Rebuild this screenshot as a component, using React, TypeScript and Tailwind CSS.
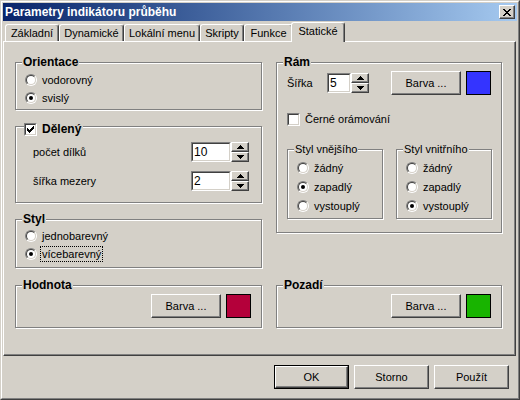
import type { ReactNode } from 'react';

function Raised({ className = '', children }: { className?: string; children?: ReactNode }) {
  return (
    <div
      className={`flex items-center justify-center border border-t-white border-l-white border-b-[#404040] border-r-[#404040] shadow-[inset_-1px_-1px_0_#808080] bg-[#D4D0C8] ${className}`}
    >
      {children}
    </div>
  );
}

function Arrow({ down }: { down?: boolean }) {
  return (
    <svg width="7" height="4" viewBox="0 0 7 4" shapeRendering="crispEdges">
      {down ? (
        <>
          <rect x="0" y="0" width="7" height="1" />
          <rect x="1" y="1" width="5" height="1" />
          <rect x="2" y="2" width="3" height="1" />
          <rect x="3" y="3" width="1" height="1" />
        </>
      ) : (
        <>
          <rect x="3" y="0" width="1" height="1" />
          <rect x="2" y="1" width="3" height="1" />
          <rect x="1" y="2" width="5" height="1" />
          <rect x="0" y="3" width="7" height="1" />
        </>
      )}
    </svg>
  );
}

function Spin({ value, editClass }: { value: string; editClass: string }) {
  return (
    <div className="flex h-[20px]">
      <div className={`h-[20px] border border-t-[#808080] border-l-[#808080] border-b-white border-r-white ${editClass}`}>
        <div className="h-full border border-t-[#404040] border-l-[#404040] border-b-[#D4D0C8] border-r-[#D4D0C8] bg-white pl-[1px] leading-[16px] text-[12px]">
          {value}
        </div>
      </div>
      <div className="flex flex-col w-[18px]">
        <Raised className="h-[10px]">
          <Arrow />
        </Raised>
        <Raised className="h-[10px]">
          <Arrow down />
        </Raised>
      </div>
    </div>
  );
}

function Radio({ checked, label, focus }: { checked?: boolean; label: string; focus?: boolean }) {
  return (
    <div className="flex items-center">
      <div className="w-[12px] h-[12px] rounded-full border border-t-[#808080] border-l-[#808080] border-b-white border-r-white">
        <div className="w-full h-full rounded-full border border-t-[#404040] border-l-[#404040] border-b-[#D4D0C8] border-r-[#D4D0C8] bg-white flex items-center justify-center">
          {checked && <div className="w-[4px] h-[4px] rounded-full bg-black" />}
        </div>
      </div>
      <span
        className={`ml-[3px] px-[1px] leading-[14px] border ${focus ? 'border-dotted border-black' : 'border-transparent'}`}
      >
        {label}
      </span>
    </div>
  );
}

function Check({ checked }: { checked?: boolean }) {
  return (
    <div className="w-[13px] h-[13px] shrink-0 border border-t-[#808080] border-l-[#808080] border-b-white border-r-white">
      <div className="w-full h-full border border-t-[#404040] border-l-[#404040] border-b-[#D4D0C8] border-r-[#D4D0C8] bg-white flex items-center justify-center">
        {checked && (
          <svg width="7" height="7" viewBox="0 0 7 7" shapeRendering="crispEdges">
            <rect x="6" y="0" width="1" height="1" />
            <rect x="5" y="1" width="2" height="1" />
            <rect x="0" y="2" width="1" height="1" />
            <rect x="4" y="2" width="3" height="1" />
            <rect x="0" y="3" width="2" height="1" />
            <rect x="3" y="3" width="3" height="1" />
            <rect x="0" y="4" width="5" height="1" />
            <rect x="1" y="5" width="3" height="1" />
            <rect x="2" y="6" width="1" height="1" />
          </svg>
        )}
      </div>
    </div>
  );
}

function Group({
  title,
  legend,
  bold = true,
  className = '',
  children,
}: {
  title?: string;
  legend?: ReactNode;
  bold?: boolean;
  className?: string;
  children?: ReactNode;
}) {
  return (
    <fieldset className={`border border-[#808080] shadow-[inset_1px_1px_0_#fff,1px_1px_0_#fff] ${className}`}>
      {legend ?? (
        <legend
          className={`ml-[6px] px-[1px] leading-[12px] bg-[#D4D0C8] ${bold ? 'font-bold text-[12px]' : 'text-[11px]'}`}
        >
          {title}
        </legend>
      )}
      {children}
    </fieldset>
  );
}

function ColorRow({ swatch }: { swatch: string }) {
  return (
    <div className="mt-[3px] h-[24px] flex justify-end items-center gap-[5px] pr-[10px]">
      <Raised className="w-[70px] h-[24px]">Barva ...</Raised>
      <div className={`w-[25px] h-[24px] border border-black ${swatch}`} />
    </div>
  );
}

const tabs = [
  { label: 'Základní', w: 'w-[54px]' },
  { label: 'Dynamické', w: 'w-[65px]' },
  { label: 'Lokální menu', w: 'w-[76px]' },
  { label: 'Skripty', w: 'w-[44px]' },
  { label: 'Funkce', w: 'w-[49px]' },
];

export default function App() {
  return (
    <div className="w-[520px] h-[400px] bg-[#D4D0C8] border border-t-[#D4D0C8] border-l-[#D4D0C8] border-b-[#404040] border-r-[#404040] font-['Liberation_Sans',Arial,sans-serif] text-[11px] text-black">
      <div className="h-full flex flex-col pt-[1px] border border-t-white border-l-white border-b-[#808080] border-r-[#808080]">
        {/* title bar */}
        <div className="mx-[1px] h-[18px] flex items-center justify-between bg-gradient-to-r from-[#0A246A] to-[#A6CAF0]">
          <span className="pl-[2px] font-bold text-[12px] text-white leading-[18px]">Parametry indikátoru průběhu</span>
          <Raised className="mr-[2px] w-[16px] h-[14px]">
            <svg width="8" height="7" viewBox="0 0 8 7" shapeRendering="crispEdges">
              <rect x="0" y="0" width="2" height="1" />
              <rect x="6" y="0" width="2" height="1" />
              <rect x="1" y="1" width="2" height="1" />
              <rect x="5" y="1" width="2" height="1" />
              <rect x="2" y="2" width="4" height="1" />
              <rect x="3" y="3" width="2" height="1" />
              <rect x="2" y="4" width="4" height="1" />
              <rect x="1" y="5" width="2" height="1" />
              <rect x="5" y="5" width="2" height="1" />
              <rect x="0" y="6" width="2" height="1" />
              <rect x="6" y="6" width="2" height="1" />
            </svg>
          </Raised>
        </div>

        {/* tabs */}
        <div className="h-[20px] flex items-end pl-[3px]">
          {tabs.map((t) => (
            <div
              key={t.label}
              className={`${t.w} h-[17px] border-t border-l border-t-white border-l-white border-r border-r-[#404040] shadow-[inset_-1px_0_0_#808080] rounded-t-[3px] text-center pt-[2px] leading-[13px] whitespace-nowrap`}
            >
              {t.label}
            </div>
          ))}
          <div className="relative z-10 w-[54px] h-[20px] -mx-[2px] -mb-px bg-[#D4D0C8] border-t border-l border-t-white border-l-white border-r border-r-[#404040] shadow-[inset_-1px_0_0_#808080] rounded-t-[3px] text-center pt-[2px] leading-[13px]">
            Statické
          </div>
        </div>

        {/* panel */}
        <div className="ml-[1px] w-[513px] h-[315px] flex gap-[14px] pl-[11px] pt-[14px] border border-t-white border-l-white border-b-[#404040] border-r-[#404040] shadow-[inset_-1px_-1px_0_#808080]">
          <div className="w-[247px] flex flex-col">
            <Group title="Orientace" className="h-[54px]">
              <div className="mt-[3px] pl-[9px]">
                <div className="h-[18px] flex items-center">
                  <Radio label="vodorovný" />
                </div>
                <div className="h-[18px] flex items-center">
                  <Radio label="svislý" checked />
                </div>
              </div>
            </Group>

            <Group
              className="mt-[6px] h-[87px]"
              legend={
                <legend className="ml-[8px] h-[20px] flex items-end bg-[#D4D0C8]">
                  <div className="flex items-center gap-[5px] pr-[2px] h-[13px]">
                    <Check checked />
                    <span className="font-bold text-[12px] leading-[13px]">Dělený</span>
                  </div>
                </legend>
              }
            >
              <div className="pl-[17px] pr-[12px]">
                <div className="mt-[6px] h-[20px] flex items-center justify-between">
                  <span>počet dílků</span>
                  <Spin value="10" editClass="w-[40px]" />
                </div>
                <div className="mt-[9px] h-[20px] flex items-center justify-between">
                  <span>šířka mezery</span>
                  <Spin value="2" editClass="w-[40px]" />
                </div>
              </div>
            </Group>

            <Group title="Styl" className="mt-[10px] h-[55px]">
              <div className="mt-[2px] pl-[9px]">
                <div className="h-[18px] flex items-center">
                  <Radio label="jednobarevný" />
                </div>
                <div className="h-[18px] flex items-center">
                  <Radio label="vícebarevný" checked focus />
                </div>
              </div>
            </Group>

            <Group title="Hodnota" className="mt-[11px] h-[49px]">
              <ColorRow swatch="bg-[#B4003A]" />
            </Group>
          </div>

          <div className="w-[226px] flex flex-col">
            <Group title="Rám" className="h-[177px]">
              <div className="pl-[10px]">
                <div className="mt-[3px] h-[24px] flex items-center">
                  <span className="w-[40px]">Šířka</span>
                  <Spin value="5" editClass="w-[24px]" />
                  <Raised className="ml-[22px] w-[70px] h-[24px]">Barva ...</Raised>
                  <div className="ml-[5px] w-[25px] h-[24px] border border-black bg-[#3434FF]" />
                </div>
                <div className="mt-[15px] h-[19px] flex items-center gap-[5px]">
                  <Check />
                  <span>Černé orámování</span>
                </div>
                <div className="mt-[14px] flex gap-[13px]">
                  {[
                    { title: 'Styl vnějšího', sel: 1 },
                    { title: 'Styl vnitřního', sel: 2 },
                  ].map((g) => (
                    <Group key={g.title} title={g.title} bold={false} className="w-[96px] h-[76px]">
                      <div className="mt-[3px] pl-[9px]">
                        {['žádný', 'zapadlý', 'vystouplý'].map((o, i) => (
                          <div key={o} className="h-[19px] flex items-center">
                            <Radio label={o} checked={i === g.sel} />
                          </div>
                        ))}
                      </div>
                    </Group>
                  ))}
                </div>
              </div>
            </Group>

            <Group title="Pozadí" className="mt-[46px] h-[49px]">
              <ColorRow swatch="bg-[#18B400]" />
            </Group>
          </div>
        </div>

        {/* buttons */}
        <div className="mt-[9px] flex justify-end gap-[5px] pr-[9px]">
          <div className="w-[75px] h-[24px] border border-black">
            <Raised className="w-full h-full">OK</Raised>
          </div>
          <Raised className="w-[75px] h-[24px]">Storno</Raised>
          <Raised className="w-[75px] h-[24px]">Použít</Raised>
        </div>
      </div>
    </div>
  );
}
